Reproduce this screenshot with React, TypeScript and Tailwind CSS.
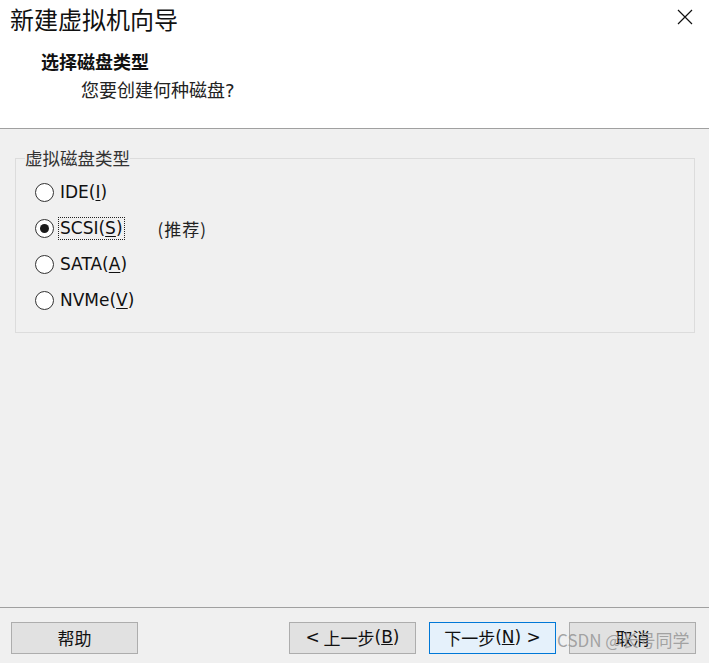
import React from 'react'

const cjk = '"Noto Sans CJK SC", "Noto Sans", sans-serif'
const latin = '"DejaVu Sans", "Noto Sans CJK SC", sans-serif'

const options = [
  { id: 'ide', label: 'IDE(', key: 'I', checked: false },
  { id: 'scsi', label: 'SCSI(', key: 'S', checked: true, note: '(推荐)' },
  { id: 'sata', label: 'SATA(', key: 'A', checked: false },
  { id: 'nvme', label: 'NVMe(', key: 'V', checked: false }
]

function Radio({ checked }: { checked: boolean }) {
  return (
    <span className="flex h-[19px] w-[19px] items-center justify-center rounded-full border border-[#333] bg-white">
      {checked && <span className="h-[9px] w-[9px] rounded-full bg-[#1a1a1a]" />}
    </span>
  )
}

function Button({ children, primary }: { children: React.ReactNode; primary?: boolean }) {
  return (
    <button
      className={
        primary
          ? 'flex h-[32px] w-[127px] items-center justify-center border border-[#0078d7] bg-[#e5f1fb] text-[17px] text-[#111]'
          : 'flex h-[32px] w-[127px] items-center justify-center border border-[#adadad] bg-[#e1e1e1] text-[17px] text-[#111]'
      }
      style={{ fontFamily: cjk }}
    >
      {children}
    </button>
  )
}

export default function App() {
  return (
    <div className="relative flex h-[663px] w-[709px] flex-col overflow-hidden bg-[#f0f0f0] text-[#111]" style={{ fontFamily: cjk }}>
      {/* Header */}
      <div className="relative h-[129px] shrink-0 border-b border-[#a0a0a0] bg-white">
        <div className="pl-[10px] pt-[2px] text-[24px] leading-[34px] text-[#111]">新建虚拟机向导</div>
        <div className="mt-[13px] pl-[41px] text-[18px] font-bold leading-[24px]">选择磁盘类型</div>
        <div className="mt-[4px] pl-[81px] text-[18px] leading-[24px] text-[#222]">
          您要创建何种磁盘<span style={{ fontFamily: latin }}>?</span>
        </div>
        <svg className="absolute left-[677px] top-[9px]" width="16" height="16" viewBox="0 0 16 16">
          <path d="M1 1 L15 15 M15 1 L1 15" stroke="#111" strokeWidth="1.2" fill="none" />
        </svg>
      </div>

      {/* Body */}
      <div className="flex-1 px-[15px] pt-[19px]">
        <fieldset className="h-[185px] w-[680px] border border-[#dcdcdc] px-[19px]">
          <legend className="ml-[-10px] px-[0px] text-[17.5px] leading-[20px] text-[#333]">虚拟磁盘类型</legend>
          <div className="mt-[14px] flex flex-col gap-[15px]">
            {options.map((o) => (
              <div key={o.id} className="flex h-[21px] items-center">
                <Radio checked={o.checked} />
                <span
                  className={
                    o.checked
                      ? 'ml-[5px] px-[1px] text-[17px] leading-[21px] outline outline-1 outline-dotted outline-[#222]'
                      : 'ml-[5px] px-[1px] text-[17px] leading-[21px]'
                  }
                  style={{ fontFamily: latin }}
                >
                  {o.label}
                  <span className="underline underline-offset-2">{o.key}</span>)
                </span>
                {o.note && <span className="ml-[34px] text-[17px] tracking-[1px] text-[#222]">{o.note}</span>}
              </div>
            ))}
          </div>
        </fieldset>
      </div>

      {/* Footer */}
      <div className="flex h-[56px] shrink-0 items-start border-t border-[#a0a0a0] pt-[14px]">
        <div className="pl-[11px]">
          <Button>帮助</Button>
        </div>
        <div className="ml-auto flex gap-[13px] pr-[13px]">
          <Button>
            <span style={{ fontFamily: latin }}>&lt;</span>&nbsp;上一步<span style={{ fontFamily: latin }}>(<span className="underline">B</span>)</span>
          </Button>
          <Button primary>
            下一步<span style={{ fontFamily: latin }}>(<span className="underline">N</span>)&nbsp;&gt;</span>
          </Button>
          <Button>取消</Button>
        </div>
      </div>

      {/* Watermark */}
      <div className="pointer-events-none absolute left-[557px] top-[628px] text-[17px] leading-[24px] text-[#9a9a9a]/90" style={{ fontFamily: cjk }}>
        CSDN @长号同学
      </div>
    </div>
  )
}
